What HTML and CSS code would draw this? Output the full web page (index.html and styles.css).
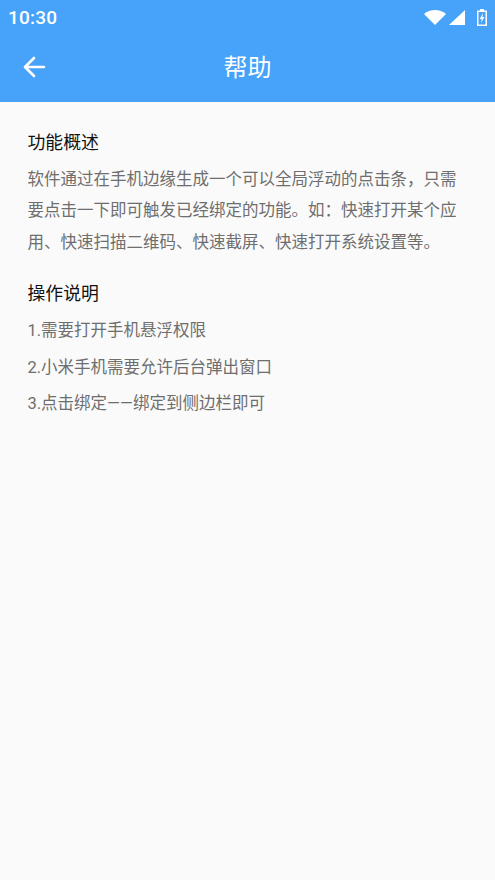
FILE: index.html
```html
<!DOCTYPE html>
<html lang="zh-CN">
<head>
<meta charset="utf-8">
<title>帮助</title>
<link rel="stylesheet" href="styles.css">
</head>
<body>
<header class="top">
  <div class="status">
    <span class="clock">10:30</span>
    <span class="status-icons">
      <svg class="wifi" viewBox="0 0 22 15" width="22" height="15"><path d="M0 4 C6 -1.2 16 -1.2 22 4 L11 15 Z" fill="#fff"/></svg>
      <svg class="signal" viewBox="0 0 16 15" width="16" height="15"><path d="M16 0 V15 H0 Z" fill="#fff"/></svg>
      <svg class="battery" viewBox="0 0 10 17" width="10" height="17"><path fill-rule="evenodd" d="M3 0 H7 V1.5 H10 V17 H0 V1.5 H3 Z M1.5 3 V15.5 H8.5 V3 Z" fill="#fff"/><path d="M6 4 L2.8 10 H4.7 L4 14 L7.4 8 H5.4 Z" fill="#fff"/></svg>
    </span>
  </div>
  <div class="bar">
    <svg class="back" viewBox="0 0 24 24" width="24" height="24"><path d="M22 12 H3.5 M12 3 L3 12 L12 21" fill="none" stroke="#fff" stroke-width="2.6" stroke-linecap="round" stroke-linejoin="round"/></svg>
    <h1 class="title">帮助</h1>
  </div>
</header>
<main class="content">
  <section class="sec">
    <h2 class="head">功能概述</h2>
    <p class="para">软件通过在手机边缘生成一个可以全局浮动的点击条，只需要点击一下即可触发已经绑定的功能。如：快速打开某个应用、快速扫描二维码、快速截屏、快速打开系统设置等。</p>
  </section>
  <section class="sec">
    <h2 class="head head-list">操作说明</h2>
    <p class="item">1.需要打开手机悬浮权限</p>
    <p class="item">2.小米手机需要允许后台弹出窗口</p>
    <p class="item">3.点击绑定——绑定到侧边栏即可</p>
  </section>
</main>
</body>
</html>
```
FILE: styles.css
```css
* { box-sizing: border-box; }
html, body { margin: 0; padding: 0; }
body {
  width: 495px;
  height: 880px;
  overflow: hidden;
  background: #fafafa;
  font-family: Roboto, "Noto Sans CJK SC", sans-serif;
}
.top { background: #46a3f9; height: 102px; color: #fff; }
.status {
  height: 34px;
  display: flex;
  align-items: center;
  justify-content: space-between;
  padding: 0 8px 0 8px;
}
.clock { font-size: 19px; font-weight: 500; letter-spacing: 0.2px; }
.status-icons { display: flex; align-items: center; gap: 3px; }
.battery { margin-left: 9px; }
.bar { height: 68px; padding-bottom: 5px; position: relative; display: flex; align-items: center; justify-content: center; }
.back { position: absolute; left: 22px; top: 21px; }
.title { margin: 0; font-size: 24px; font-weight: 400; }
.content { padding: 28px 28px 0 27.5px; }
.sec { margin-bottom: 23px; }
.head { margin: 0; font-size: 17.875px; line-height: 25px; font-weight: 400; color: #111; }
.head-list { margin-bottom: 12px; }
.para { margin: 8.75px 0 0; font-size: 16.5px; line-height: 31.5px; color: #6e6e6e; }
.item { margin: 10.6px 0 0; font-size: 16.5px; line-height: 26px; color: #6e6e6e; }
```
